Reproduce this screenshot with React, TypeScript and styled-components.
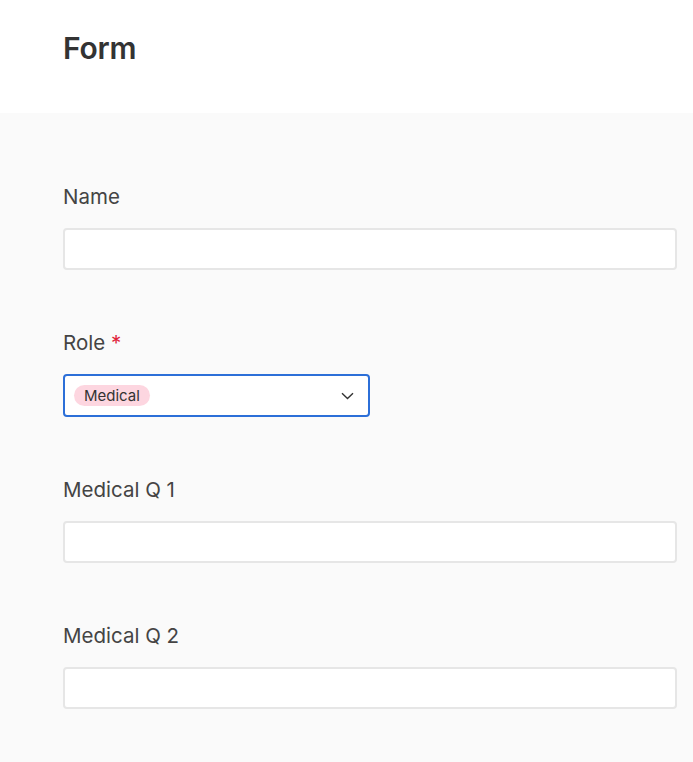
import React from 'react';
import styled, { createGlobalStyle } from 'styled-components';

const GlobalStyle = createGlobalStyle`
  html, body {
    margin: 0;
    padding: 0;
    background: #fafafa;
  }
  body {
    font-family: Inter, "Noto Sans", sans-serif;
  }
`;

const Header = styled.header`
  height: 113px;
  background: #ffffff;
  display: flex;
  align-items: center;
  padding: 0 0 18px 63px;
  box-sizing: border-box;
`;

const Title = styled.h1`
  margin: 0;
  font-family: Inter, sans-serif;
  font-size: 30px;
  font-weight: 600;
  color: #333333;
  letter-spacing: -0.2px;
`;

const Body = styled.main`
  background: #fafafa;
  padding: 72px 16px 40px 63px;
  display: flex;
  flex-direction: column;
  gap: 61px;
  min-height: 649px;
  box-sizing: border-box;
`;

const Field = styled.div`
  display: flex;
  flex-direction: column;
  gap: 19px;
`;

const Label = styled.label`
  font-size: 20.5px;
  line-height: 24px;
  color: #444444;
  font-weight: 400;
`;

const Required = styled.span`
  color: #e0243a;
  margin-left: 6px;
`;

const TextInput = styled.input`
  height: 42px;
  box-sizing: border-box;
  border: 2px solid #e6e6e6;
  border-radius: 4px;
  background: #ffffff;
  outline: none;
  font: inherit;
  padding: 0 10px;
`;

const Select = styled.div`
  width: 307px;
  height: 43px;
  box-sizing: border-box;
  border: 2px solid #2c6fd8;
  border-radius: 4px;
  background: #ffffff;
  display: flex;
  align-items: center;
  justify-content: space-between;
  padding: 0 14px 0 9px;
`;

const Tag = styled.span`
  background: #fdd6e0;
  color: #333333;
  border-radius: 11px;
  font-size: 15px;
  line-height: 21px;
  padding: 0 10px;
`;

const Chevron = () => (
  <svg width="13" height="8" viewBox="0 0 13 8" fill="none">
    <path d="M1 1.2 L6.5 6.5 L12 1.2" stroke="#333" strokeWidth="1.4" />
  </svg>
);

export default function App() {
  return (
    <>
      <GlobalStyle />
      <Header>
        <Title>Form</Title>
      </Header>
      <Body>
        <Field>
          <Label>Name</Label>
          <TextInput />
        </Field>
        <Field>
          <Label>
            Role<Required>*</Required>
          </Label>
          <Select>
            <Tag>Medical</Tag>
            <Chevron />
          </Select>
        </Field>
        <Field>
          <Label>Medical Q 1</Label>
          <TextInput />
        </Field>
        <Field>
          <Label>Medical Q 2</Label>
          <TextInput />
        </Field>
      </Body>
    </>
  );
}
